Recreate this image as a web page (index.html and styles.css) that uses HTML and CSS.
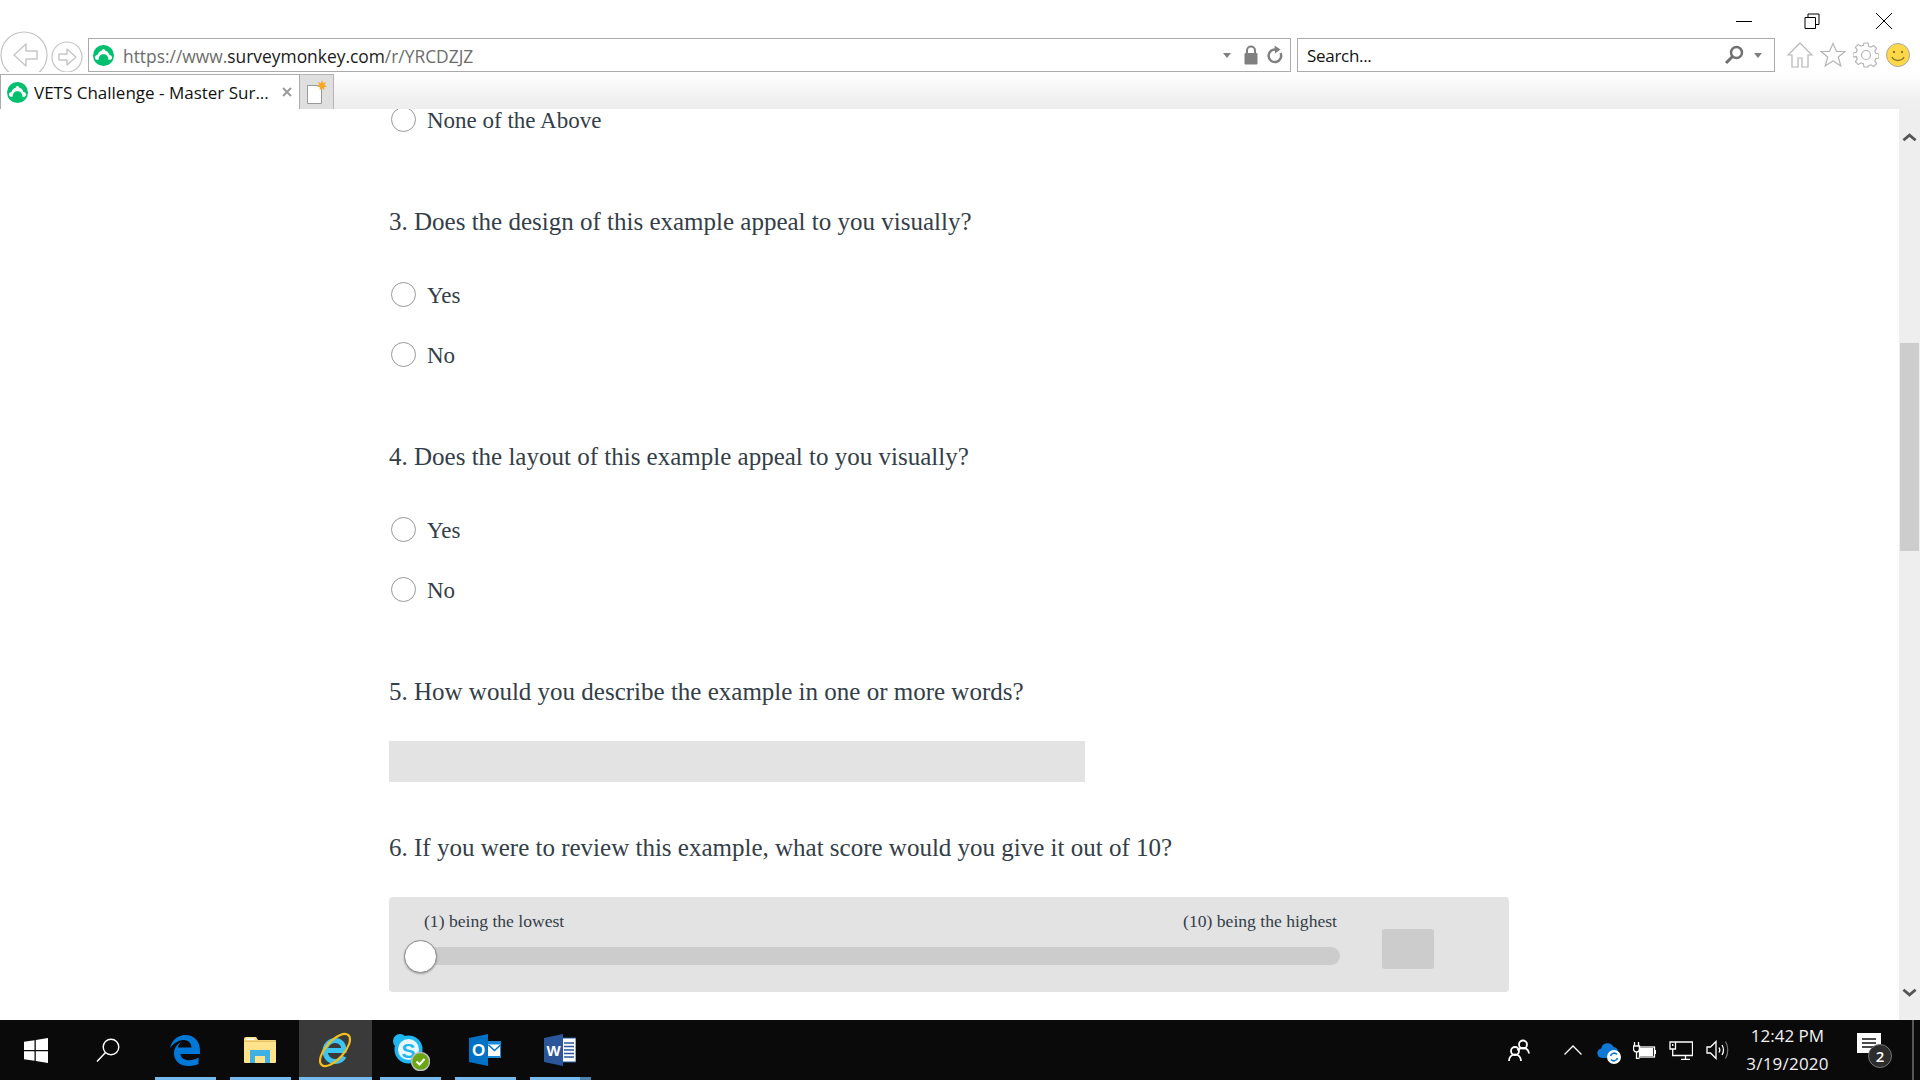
FILE: index.html
```html
<!DOCTYPE html>
<html lang="en">
<head>
<meta charset="utf-8">
<title>VETS Challenge - Master Survey</title>
<link rel="stylesheet" href="styles.css">
</head>
<body>
<svg class="defs" width="0" height="0" aria-hidden="true">
  <symbol id="monkey" viewBox="0 0 20 20">
    <circle cx="10" cy="10" r="10" fill="#00bf6f"/>
    <path fill="#fff" d="M10 3.800c1 0 1.400.8 1.700 1.600 2 .5 3.500 2 4 4.100 1.400.1 2.400 1.100 2.400 2.300 0 1.300-1 2.300-2.300 2.300-.5 0-.9-.1-1.300-.3.4-3.300-1.900-5.100-4.500-5.100s-4.900 1.800-4.500 5.100c-.4.200-.8.300-1.300.3-1.300 0-2.300-1-2.300-2.300 0-1.200 1-2.200 2.400-2.300.5-2.100 2-3.600 4-4.100.3-.8.700-1.600 1.700-1.600z"/>
  </symbol>
</svg>

<header class="chrome">
  <div class="title-row">
    <svg class="win-btn" viewBox="0 0 16 16"><path d="M0 8.500h16" class="win-line"/></svg>
    <svg class="win-btn win-restore" viewBox="0 0 16 16"><path d="M1 4.500h10.500v11H1zM4 4.500V1h11v10.500h-4" class="win-line"/></svg>
    <svg class="win-btn" viewBox="0 0 16 16"><path d="M0 0l16 16M16 0L0 16" class="win-line"/></svg>
  </div>
  <div class="nav-row">
    <svg class="back" viewBox="0 0 48 48"><circle cx="24" cy="24" r="23" class="nav-ring"/><path d="M26 13L14 24l12 11v-7h11v-8H26z" class="nav-arrow"/></svg>
    <svg class="forward" viewBox="0 0 32 32"><circle cx="16" cy="16" r="15" class="nav-ring"/><path d="M16 8l9 8-9 8v-5H8v-6h8z" class="nav-arrow"/></svg>
    <div class="address">
      <svg class="logo"><use href="#monkey"/></svg>
      <span class="url"><span class="url-dim">https://www.</span><span class="url-dark">surveymonkey.com</span><span class="url-dim">/r/YRCDZJZ</span></span>
      <span class="caret"></span>
      <svg class="lock" viewBox="0 0 14 20"><path d="M3 9V5.500a4 4 0 0 1 8 0V9" class="tool-stroke"/><rect x="0.500" y="8" width="13" height="11.500" rx="1" fill="#808080"/></svg>
      <svg class="refresh" viewBox="0 0 18 20"><path d="M14.500 8a6.300 6.300 0 1 1-4-3.300" class="refresh-stroke"/><path d="M8.500 0.500l6 4-5.500 4z" fill="#808080"/></svg>
    </div>
    <div class="search">
      <span class="search-text">Search...</span>
      <svg class="magnifier" viewBox="0 0 20 20"><circle cx="12.500" cy="7.500" r="5.500" class="mag-stroke"/><path d="M8.500 11.500L2 18" class="mag-handle"/></svg>
      <span class="caret caret-search"></span>
    </div>
    <div class="tools">
      <svg class="tool" viewBox="0 0 26 26"><path d="M13 1L1 13h4v12h6v-9h4v9h6V13h4z" class="tool-line"/></svg>
      <svg class="tool" viewBox="0 0 26 26"><path d="M13 1.500l3.500 8h8.500l-6.700 5.500 2.500 9-7.800-5-7.800 5 2.500-9L1 9.500h8.500z" class="tool-line"/></svg>
      <svg class="tool" viewBox="0 0 26 26"><path d="M11 1h4l.7 3.300 2.200.9 2.800-1.800 2.900 2.900-1.800 2.800.9 2.200 3.300.7v4l-3.300.7-.9 2.200 1.800 2.800-2.900 2.900-2.800-1.800-2.200.9L15 25h-4l-.7-3.300-2.200-.9-2.800 1.800-2.900-2.900 1.800-2.800-.9-2.200L0 15v-4l3.300-.7.9-2.200-1.800-2.800 2.900-2.900 2.800 1.800 2.200-.9z" class="tool-line"/><circle cx="13" cy="13" r="4.500" class="tool-line"/></svg>
      <svg class="smiley" viewBox="0 0 24 24"><circle cx="12" cy="12" r="11.500" fill="#ffd84a" stroke="#a8a8a8"/><circle cx="8" cy="9" r="1.200" fill="#8a7a30"/><circle cx="16" cy="9" r="1.200" fill="#8a7a30"/><path d="M6 14c2 4.500 10 4.500 12 0" fill="none" stroke="#8a7a30" stroke-width="1.500"/></svg>
    </div>
  </div>
  <div class="tab-row">
    <div class="tab">
      <svg class="logo"><use href="#monkey"/></svg>
      <span class="tab-title">VETS Challenge - Master Sur...</span>
      <svg class="tab-close" viewBox="0 0 10 10"><path d="M1 1l8 8M9 1l-8 8"/></svg>
    </div>
    <div class="new-tab">
      <svg class="new-tab-icon" viewBox="0 0 22 26"><path d="M1.500 6.500h14v18h-14z" fill="#fff" stroke="#9a9a9a"/><path d="M16 1l1 3 3-1-1.500 3 2.500 1.500-3 .8.500 3-2.500-2-2.500 2 .5-3-3-.8L13.500 6 12 3l3 1z" fill="#f7a823"/></svg>
    </div>
  </div>
</header>

<div class="viewport">
  <main class="page">
    <div class="options options-clipped">
      <label class="option"><span class="radio"></span><span class="option-text">None of the Above</span></label>
    </div>

    <section class="question">
      <h2 class="q-title">3. Does the design of this example appeal to you visually?</h2>
      <div class="options">
        <label class="option"><span class="radio"></span><span class="option-text">Yes</span></label>
        <label class="option"><span class="radio"></span><span class="option-text">No</span></label>
      </div>
    </section>

    <section class="question">
      <h2 class="q-title">4. Does the layout of this example appeal to you visually?</h2>
      <div class="options">
        <label class="option"><span class="radio"></span><span class="option-text">Yes</span></label>
        <label class="option"><span class="radio"></span><span class="option-text">No</span></label>
      </div>
    </section>

    <section class="question question-text">
      <h2 class="q-title q-title-tight">5. How would you describe the example in one or more words?</h2>
      <div class="text-field"></div>
    </section>

    <section class="question">
      <h2 class="q-title q-title-tight">6. If you were to review this example, what score would you give it out of 10?</h2>
      <div class="slider-panel">
        <div class="slider-col">
          <div class="slider-labels"><span>(1) being the lowest</span><span>(10) being the highest</span></div>
          <div class="slider-track"><span class="slider-thumb"></span></div>
        </div>
        <div class="slider-value"></div>
      </div>
    </section>
  </main>
  <aside class="scrollbar">
    <svg class="scroll-arrow" viewBox="0 0 16 10"><path d="M1.500 8.500L8 3l6.500 5.500"/></svg>
    <div class="scroll-thumb"></div>
    <svg class="scroll-arrow scroll-arrow-end" viewBox="0 0 16 10"><path d="M1.500 1.500L8 7l6.500-5.500"/></svg>
  </aside>
</div>

<footer class="taskbar">
  <div class="tb-fixed">
    <svg class="tb-win" viewBox="0 0 24 25"><path fill="#fff" d="M0 3.800L10.500 2.200V12H0zM11.800 2L24 0v12H11.800zM0 13.200h10.500v9.600L0 21.300zM11.800 13.200H24V25l-12.200-2z"/></svg>
  </div>
  <div class="tb-fixed">
    <svg class="tb-search" viewBox="0 0 24 24"><circle cx="15" cy="9" r="7.800" fill="none" stroke="#fff" stroke-width="1.400"/><path d="M9.500 14.500L1 23.500" stroke="#fff" stroke-width="1.500"/></svg>
  </div>
  <div class="tb-app tb-first">
    <svg class="tb-edge" viewBox="0 0 30 31"><path fill="#0078d7" d="M0 13C2 5 8 0 15.500 0 24 0 30 6 30 15.500V19H10.500c.5 7 11 8 18 3.500V29c-3.500 1.500-7 2-10 2C9 31 3.500 25 4 17.500 4.300 13 7 9 11.500 6.800 9.500 8.500 8.500 10 8 12.500h13.500c0-5-4-8-8.500-7.500C8 5.500 3.500 8.500 0 13z"/></svg>
  </div>
  <div class="tb-app">
    <svg class="tb-folder" viewBox="0 0 32 26"><path fill="#ffe28c" d="M0 2a2 2 0 0 1 2-2h10l2 3h17a1 1 0 0 1 1 1v21a1 1 0 0 1-1 1H1a1 1 0 0 1-1-1z"/><path fill="#e8c468" d="M0 3.500h32V5H0z"/><path fill="#fff" d="M2 1.500h8v1.500H2z"/><path fill="#3fb0e4" d="M6 26V13h20v13h-5v-7h-10v7z"/></svg>
  </div>
  <div class="tb-app tb-active">
    <svg class="tb-ie" viewBox="0 0 34 34"><path d="M8 17.500h18C26 11 22 7.500 17 7.500S7 12 7 18s4.500 10.500 10 10.500c4 0 7.500-1.800 9-5" fill="none" stroke="#3cc4f2" stroke-width="5"/><ellipse cx="17" cy="17" rx="20" ry="9" transform="rotate(-48 17 17)" fill="none" stroke="#f2bd1d" stroke-width="2.200"/></svg>
  </div>
  <div class="tb-app">
    <svg class="tb-skype" viewBox="0 0 38 38"><circle cx="8" cy="8" r="7" fill="#1db8f2"/><circle cx="25" cy="25" r="7" fill="#1db8f2"/><circle cx="16.500" cy="16.500" r="14" fill="#1db8f2"/><circle cx="16.500" cy="16.500" r="10.500" fill="#e8f8fe"/><text x="16.500" y="24.500" class="tb-s">S</text><circle cx="28.500" cy="28.500" r="9" fill="#6ba712" stroke="#bbb" stroke-width="1.500"/><path d="M24.500 28.500l3 3 5-5.500" fill="none" stroke="#fff" stroke-width="2"/></svg>
  </div>
  <div class="tb-app">
    <svg class="tb-office" viewBox="0 0 32 32"><path fill="#0072c6" d="M19 0v32L0 28V4z"/><rect x="19" y="7" width="13" height="17" fill="#1a8ad4"/><path fill="#fff" d="M19 10.500h12V22H19z"/><path d="M19.500 11l6 5.500 6-5.500" fill="none" stroke="#0072c6" stroke-width="1.500"/><text x="9.500" y="21.500" class="tb-o">O</text></svg>
  </div>
  <div class="tb-app tb-stacked">
    <svg class="tb-office" viewBox="0 0 32 32"><rect x="17" y="4" width="15" height="24" fill="#fff" stroke="#2b579a"/><path d="M20 9h10M20 12.500h10M20 16h10M20 19.500h10M20 23h10" stroke="#2b579a" stroke-width="1.500"/><path fill="#2b579a" d="M0 4l19-4v32L0 28z"/><text x="9.500" y="21.500" class="tb-w">W</text></svg>
  </div>

  <div class="tray">
    <svg class="tray-people" viewBox="0 0 22 23"><circle cx="15" cy="5.500" r="4" class="tray-bold"/><path d="M9.500 11.500c1-2 2.500-2.500 5.500-2.500s5.500 1.500 6 5.500" class="tray-bold"/><circle cx="7" cy="12" r="4" class="tray-bold"/><path d="M1 22c0-4 2.500-6.500 6-6.500s6 2.500 6 6.500" class="tray-bold"/></svg>
    <svg class="tray-chevron" viewBox="0 0 18 10"><path d="M0.500 9.500L9 1l8.500 8.500" class="tray-line"/></svg>
    <svg class="tray-cloud" viewBox="0 0 24 23"><path fill="#0f78d4" d="M5 17a4.800 4.800 0 0 1-.8-9.500A6.500 6.500 0 0 1 16.500 6 5 5 0 0 1 21 11v6z"/><circle cx="17" cy="16" r="7" fill="#fff"/><path d="M13.500 15a3.700 3.700 0 0 1 6.500-1.500M20.500 17a3.700 3.700 0 0 1-6.500 1.500" fill="none" stroke="#0f78d4" stroke-width="1.600"/></svg>
    <svg class="tray-battery" viewBox="0 0 23 17"><path d="M1.500 0v4M5.500 0v4M0.500 4h6v3a3 3 0 0 1-6 0zM3.500 10v6.500h3" class="tray-line"/><rect x="6.500" y="5" width="15" height="10" class="tray-line"/><rect x="7" y="6" width="13" height="8" fill="#fff"/><path d="M22 8h1v4h-1z" fill="#fff"/></svg>
    <svg class="tray-net" viewBox="0 0 24 19"><path d="M6.500 1h17v13.500H6.500M1 1h5.500v7H1zM3.700 8v6.500h3M3.700 3v2M12 18.500h9M16.500 14.500v4" class="tray-line"/></svg>
    <svg class="tray-speaker" viewBox="0 0 23 20"><path d="M1 7h3.500L10 1.500v17L4.500 13H1z" class="tray-line"/><path d="M13 7.500c1 1.500 1 3.500 0 5" class="tray-line"/><path d="M16 5c1.800 3 1.800 7 0 10" class="tray-line"/><path d="M19.500 1.500c3 5 3 12 0 17" class="tray-faint"/></svg>
    <div class="clock"><div>12:42 PM</div><div class="clock-date">3/19/2020</div></div>
    <div class="notify">
      <svg class="notify-bubble" viewBox="0 0 25 27"><path fill="#fff" d="M0 0h24v20H17l-5 6v-6H0z"/><path d="M5 6h14M5 10h14M5 14h14" stroke="#111" stroke-width="1.400"/></svg>
      <span class="notify-badge">2</span>
    </div>
    <span class="tray-edge"></span>
  </div>
</footer>
</body>
</html>
```

FILE: styles.css
```css
* { box-sizing: border-box; }
html, body { margin: 0; height: 100%; }
body {
  width: 1920px;
  height: 1080px;
  overflow: hidden;
  display: flex;
  flex-direction: column;
  background: #fff;
  font-family: "Liberation Serif", serif;
}
.defs { position: absolute; }
svg { display: block; flex: none; }

/* Browser chrome */
.chrome { flex: none; height: 109px; font-family: "Open Sans", "Noto Sans", sans-serif; background: #fff; position: relative; z-index: 2; }
.title-row { height: 38px; display: flex; justify-content: flex-end; align-items: flex-start; padding: 13px 28px 0 0; gap: 54px; }
.win-btn { width: 16px; height: 16px; }
.win-restore { margin-left: -2px; margin-right: 2px; }
.win-line { fill: none; stroke: #000; stroke-width: 1; }

.nav-row { height: 34px; display: flex; align-items: center; }
.back { width: 48px; height: 48px; margin-left: 0; position: relative; z-index: 0; }
.forward { width: 32px; height: 32px; margin-left: 3px; margin-top: 4px; }
.nav-ring { fill: #fff; stroke: #c4c4c4; stroke-width: 1.200; }
.nav-arrow { fill: #fff; stroke: #c8c8c8; stroke-width: 1.500; stroke-linejoin: round; }

.address {
  width: 1203px; height: 34px; margin-left: 5px; flex: none;
  display: flex; align-items: center;
  border: 1px solid #ababab; background: #fff; padding-left: 4px;
}
.logo { width: 21px; height: 21px; }
.url { font-size: 17.400px; line-height: 24px; padding-top: 1px; margin-left: 9px; flex: 1; color: #000; }
.url-dim { color: #6d6d6d; }
.url-dark { color: #1a1a1a; }
.caret { width: 0; height: 0; border-left: 4.500px solid transparent; border-right: 4.500px solid transparent; border-top: 5px solid #808080; flex: none; }
.lock { width: 14px; height: 20px; margin-left: 13px; }
.tool-stroke { fill: none; stroke: #808080; stroke-width: 2; }
.refresh { width: 18px; height: 20px; margin-left: 8px; margin-right: 6px; }
.refresh-stroke { fill: none; stroke: #808080; stroke-width: 2.500; }

.search {
  width: 478px; height: 34px; margin-left: 6px; flex: none;
  display: flex; align-items: center;
  border: 1px solid #ababab; background: #fff; padding-left: 9px;
}
.search-text { font-size: 17px; line-height: 24px; padding-top: 1px; letter-spacing: -0.3px; color: #111; flex: 1; }
.magnifier { width: 20px; height: 20px; }
.mag-stroke { fill: none; stroke: #707070; stroke-width: 2.500; }
.mag-handle { fill: none; stroke: #707070; stroke-width: 3; }
.caret-search { margin-left: 10px; margin-right: 12px; }

.tools { display: flex; align-items: center; margin-left: 12px; gap: 7px; }
.tool { width: 26px; height: 26px; }
.tool-line { fill: #fff; stroke: #b4b4b4; stroke-width: 1.200; }
.smiley { width: 24px; height: 24px; }

.tab-row {
  height: 37px; margin-top: 0; display: flex; align-items: stretch; position: relative;
  background: linear-gradient(to bottom, #fff 0%, #f0f0f0 75%, #eee 100%);
}
.tab {
  width: 300px; height: 35px; margin-top: 2px;
  display: flex; align-items: center;
  background: #fff; border: 1px solid #ababab; border-bottom: 0; padding-left: 6px;
  position: relative; z-index: 1;
}
.tab-title { font-size: 17px; line-height: 24px; padding-top: 1px; color: #111; margin-left: 6px; flex: 1; white-space: nowrap; }
.tab-close { width: 10px; height: 10px; margin-right: 7px; fill: none; stroke: #9a9a9a; stroke-width: 2; }
.new-tab {
  width: 34px; height: 35px; margin-top: 2px;
  display: flex; align-items: center; justify-content: center;
  background: #dfdfdf; border: 1px solid #b4b4b4; border-left: 0; border-bottom: 0;
}
.new-tab-icon { width: 22px; height: 26px; }

/* Page */
.viewport { flex: 1; min-height: 0; display: flex; }
.page { flex: 1; padding-left: 389px; margin-top: -4px; color: #333e48; }
.options { display: flex; flex-direction: column; gap: 30px; }
.options-clipped { margin-bottom: 72px; }
.option { height: 30px; display: flex; align-items: center; font-size: 23px; line-height: 20px; }
.option-text { padding-top: 2px; }
.radio { width: 25px; height: 25px; margin: 0 11px 2px 2px; border-radius: 50%; background: #fff; border: 1.500px solid #999; flex: none; }

.question { margin-bottom: 72px; }
.question-text { margin-bottom: 51px; }
.q-title { margin: 0 0 43px; height: 30px; font-size: 25px; line-height: 30px; font-weight: 400; white-space: nowrap; }
.q-title-tight { margin-bottom: 34px; }
.text-field { width: 696px; height: 41px; background: #e3e3e3; }

.slider-panel { width: 1120px; height: 95px; background: #e3e3e3; border-radius: 4px; padding: 14px 0 0 15px; display: flex; align-items: flex-start; }
.slider-col { width: 936px; }
.slider-labels { display: flex; justify-content: space-between; padding: 0 3px 0 20px; height: 20px; font-size: 17.600px; line-height: 20px; }
.slider-track { height: 18px; margin-top: 16px; background: #ccc; border-radius: 9px; position: relative; }
.slider-thumb { position: absolute; left: 0; top: -7px; width: 33px; height: 33px; border-radius: 50%; background: #fff; border: 1px solid #8a8a8a; box-shadow: 0 1px 2px rgba(0,0,0,.3); }
.slider-value { width: 52px; height: 40px; margin: 18px 0 0 42px; background: #ccc; border-radius: 3px; }

.scrollbar { width: 21px; flex: none; background: #eee; display: flex; flex-direction: column; align-items: center; padding: 23px 0 0; }
.scroll-arrow { width: 15px; height: 10px; fill: none; stroke: #555; stroke-width: 3; }
.scroll-thumb { width: 19px; height: 208px; margin-top: 201px; background: #cdcdcd; }
.scroll-arrow-end { margin-top: auto; margin-bottom: 22px; }

/* Taskbar */
.taskbar { flex: none; height: 60px; background: #0a0a0a; display: flex; color: #fff; font-family: "Open Sans", "Noto Sans", sans-serif; position: relative; z-index: 2; }
.tb-fixed { width: 72px; display: flex; align-items: center; justify-content: center; }
.tb-win { width: 24px; height: 25px; }
.tb-search { width: 24px; height: 24px; }
.tb-app { width: 73px; margin-right: 2px; display: flex; align-items: center; justify-content: center; position: relative; }
.tb-app svg { margin-right: 2px; }
.tb-app .tb-skype { margin-right: 0; }
.tb-app::after { content: ""; position: absolute; left: 6px; right: 6px; bottom: 0; height: 3px; background: #76b9ed; }
.tb-first { margin-left: 5px; }
.tb-active { background: #3a3a3a; }
.tb-active::after { left: 0; right: 0; }
.tb-stacked::after { background: linear-gradient(to right, #76b9ed 82%, #4a82ad 82%); }
.tb-edge { width: 30px; height: 31px; }
.tb-folder { width: 32px; height: 26px; }
.tb-ie { width: 34px; height: 34px; overflow: visible; }
.tb-skype { width: 38px; height: 38px; margin-top: 3px; }
.tb-office { width: 32px; height: 32px; }
.tb-s { font: 700 21px "Liberation Sans", sans-serif; fill: #1db8f2; text-anchor: middle; }
.tb-o { font: 700 17px "Liberation Sans", sans-serif; fill: #fff; text-anchor: middle; }
.tb-w { font: 700 15px "Liberation Sans", sans-serif; fill: #fff; text-anchor: middle; }

.tray { margin-left: auto; display: flex; align-items: center; height: 60px; }
.tray-line { fill: none; stroke: #fff; stroke-width: 1.300; }
.tray-bold { fill: none; stroke: #fff; stroke-width: 1.800; }
.tray-faint { fill: none; stroke: #777; stroke-width: 1.200; }
.tray-people { width: 22px; height: 23px; }
.tray-chevron { width: 18px; height: 10px; margin-left: 34px; }
.tray-cloud { width: 24px; height: 23px; margin-left: 15px; margin-top: 4px; }
.tray-battery { width: 23px; height: 17px; margin-left: 12px; }
.tray-net { width: 24px; height: 19px; margin-left: 13px; }
.tray-speaker { width: 23px; height: 20px; margin-left: 13px; }
.clock { width: 83px; margin-left: 17px; text-align: center; font-size: 17px; line-height: 28px; white-space: nowrap; color: #f2f2f2; }
.clock-date { letter-spacing: 0.2px; }
.notify { width: 34px; height: 40px; margin-left: 28px; position: relative; }
.notify-bubble { width: 25px; height: 27px; margin-top: 3px; }
.notify-badge { position: absolute; left: 11px; top: 14px; width: 24px; height: 24px; border-radius: 50%; background: #2d2d2d; border: 1px solid #777; display: flex; align-items: center; justify-content: center; font-size: 15px; font-weight: 600; }
.tray-edge { width: 2px; height: 60px; background: #555; margin: 0 6px 0 21px; }
```
